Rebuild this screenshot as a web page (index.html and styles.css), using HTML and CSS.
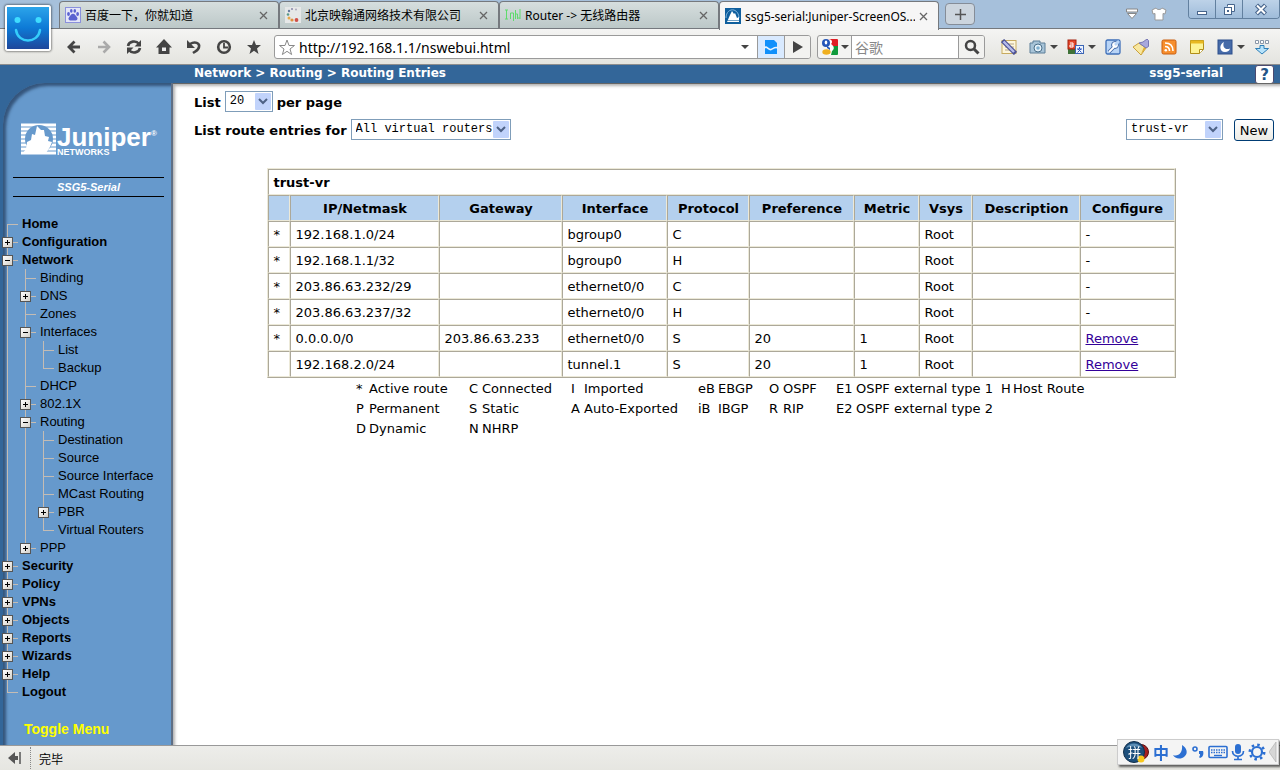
FILE: index.html
```html
<!DOCTYPE html>
<html lang="zh-CN">
<head>
    <meta charset="UTF-8">
    <meta name="viewport" content="width=device-width, initial-scale=1.0">
    <title>ssg5-serial:Juniper-ScreenOS</title>
    <link rel="stylesheet" href="styles.css">
</head>
<body>
    <!-- Browser frame -->
    <header class="browser">
        <button class="app-button" aria-label="Menu">
            <svg width="42" height="42" viewBox="0 0 42 42">
                <defs>
                    <linearGradient id="face" x1="0" y1="0" x2="0" y2="1">
                        <stop offset="0" stop-color="#2ba4ea"/>
                        <stop offset=".5" stop-color="#0d7ad6"/>
                        <stop offset="1" stop-color="#1f479b"/>
                    </linearGradient>
                </defs>
                <rect width="42" height="42" fill="url(#face)"/>
                <circle cx="10.500" cy="13" r="3" fill="#3fdcff"/>
                <circle cx="31.500" cy="13" r="3" fill="#3fdcff"/>
                <path d="M9 23c2 14 22 14 24 0" fill="none" stroke="#35cdfb" stroke-width="2.500" stroke-linecap="round"/>
            </svg>
        </button>

        <div class="tab-strip">
            <div class="tab">
                <svg class="favicon" width="16" height="16" viewBox="0 0 16 16">
                    <rect x=".5" y=".5" width="15" height="15" fill="#e4e6f8" stroke="#8a90dc"/>
                    <g fill="#5a62d0">
                        <ellipse cx="3.500" cy="7" rx="1.400" ry="1.900"/>
                        <ellipse cx="6.300" cy="3.900" rx="1.300" ry="1.800"/>
                        <ellipse cx="9.800" cy="3.900" rx="1.300" ry="1.800"/>
                        <ellipse cx="12.600" cy="7" rx="1.400" ry="1.900"/>
                        <path d="M8 6.800c2 0 2.500 2 4 3.500 1.500 2-.5 3.700-2.500 3.200h-3c-2 .5-4-1.200-2.500-3.200C5.500 8.800 6 6.800 8 6.800z"/>
                    </g>
                </svg>
                <span class="tab-title">百度一下，你就知道</span>
                <button class="tab-close" aria-label="Close"><svg width="9" height="9" viewBox="0 0 9 9"><path d="M1 1l7 7M8 1l-7 7"/></svg></button>
            </div>
            <div class="tab">
                <svg class="favicon" width="16" height="16" viewBox="0 0 16 16">
                    <rect width="16" height="16" fill="#e6e8e8"/>
                    <circle cx="11" cy="2.500" r="1" fill="#aab"/>
                    <circle cx="7" cy="2" r="1" fill="#88a"/>
                    <circle cx="4" cy="4" r="1.200" fill="#667ba0"/>
                    <circle cx="3" cy="7.500" r="1.300" fill="#5b9a8a"/>
                    <circle cx="4" cy="11" r="1.500" fill="#e8a848"/>
                    <circle cx="7" cy="13" r="1.600" fill="#e09040"/>
                    <circle cx="11.500" cy="13" r="1.900" fill="#d05048"/>
                </svg>
                <span class="tab-title">北京映翰通网络技术有限公司</span>
                <button class="tab-close" aria-label="Close"><svg width="9" height="9" viewBox="0 0 9 9"><path d="M1 1l7 7M8 1l-7 7"/></svg></button>
            </div>
            <div class="tab">
                <svg class="favicon" width="16" height="16" viewBox="0 0 16 16">
                    <path d="M1.500 3v9M0 3h3M0 12h3M5.500 12V6h3v8M10.500 3v9M10.500 7h2v5M15 2v10M15 11h-2" fill="none" stroke="#5fdc6c"/>
                </svg>
                <span class="tab-title">Router -&gt; 无线路由器</span>
                <button class="tab-close" aria-label="Close"><svg width="9" height="9" viewBox="0 0 9 9"><path d="M1 1l7 7M8 1l-7 7"/></svg></button>
            </div>
            <div class="tab tab-active">
                <svg class="favicon" width="16" height="16" viewBox="0 0 16 16">
                    <rect width="16" height="16" fill="#0f5f9e"/>
                    <path d="M1 10C1 4 5 1 9 2c3 1 5 4 5 8" fill="none" stroke="#7fb4dc"/>
                    <path d="M2 14l3-7 2-4 2 3 1-1 2 5 2-1v5z" fill="#fff"/>
                    <path d="M0 12.500h16M0 14.500h16" stroke="#0f5f9e" stroke-width=".6"/>
                </svg>
                <span class="tab-title">ssg5-serial:Juniper-ScreenOS...</span>
                <button class="tab-close" aria-label="Close"><svg width="9" height="9" viewBox="0 0 9 9"><path d="M1 1l7 7M8 1l-7 7"/></svg></button>
            </div>
            <button class="new-tab" aria-label="New tab"><svg width="11" height="11" viewBox="0 0 11 11"><path d="M5.500 0v11M0 5.500h11" stroke="#555" stroke-width="1.500"/></svg></button>

            <div class="strip-icons">
                <svg width="14" height="12" viewBox="0 0 14 12"><path d="M1.500 1h11v3h-11zM2.500 5.500h9L7 10.500z" fill="#fff" stroke="#888"/></svg>
                <svg width="16" height="14" viewBox="0 0 16 14"><path d="M5 1c1 2 5 2 6 0l4 2-1 4-2-.5V13H4V6.500L2 7 1 3z" fill="#fff" stroke="#999"/></svg>
            </div>
            <div class="window-buttons">
                <button aria-label="Minimize"><svg width="12" height="13" viewBox="0 0 12 13"><rect x="1.500" y="8.500" width="9" height="3" fill="#fff" stroke="#47658c"/></svg></button>
                <button aria-label="Restore"><svg width="13" height="13" viewBox="0 0 13 13"><path d="M4.500 3.500v-2h7v7h-3" fill="#fff" stroke="#47658c"/><rect x="1.500" y="4.500" width="7" height="7" fill="#fff" stroke="#47658c"/><rect x="4" y="7" width="2" height="2" fill="#47658c"/></svg></button>
                <button class="close" aria-label="Close"><svg width="14" height="13" viewBox="0 0 14 13"><path d="M2.500 2l9 9M11.500 2l-9 9" stroke="#47658c" stroke-width="4.400"/><path d="M3 2.500l8 8M11 2.500l-8 8" stroke="#fff" stroke-width="2"/></svg></button>
            </div>
        </div>

        <div class="toolbar">
            <nav class="nav-buttons">
                <button aria-label="Back"><svg width="16" height="16" viewBox="0 0 16 16"><path d="M14 8H4M8.500 2.500L3 8l5.500 5.500" fill="none" stroke="#444" stroke-width="2.800"/></svg></button>
                <button aria-label="Forward"><svg width="16" height="16" viewBox="0 0 16 16"><path d="M2 8h10M7.500 2.500L13 8l-5.500 5.500" fill="none" stroke="#aaa" stroke-width="2.600"/></svg></button>
                <button aria-label="Reload"><svg width="16" height="16" viewBox="0 0 16 16"><path d="M2 7c1-5 8-6 11-2M14 9c-1 5-8 6-11 2" fill="none" stroke="#444" stroke-width="2.600"/><path d="M15 1v6.500H8.500zM1 15V8.500h6.500z" fill="#444"/></svg></button>
                <button aria-label="Home"><svg width="16" height="16" viewBox="0 0 16 16"><path d="M8 0l8 8.500h-2.500V15h-11V8.500H0z" fill="#444"/><path d="M6 8.500h4V12H6z" fill="#eee"/></svg></button>
                <button aria-label="Undo"><svg width="16" height="16" viewBox="0 0 16 16"><path d="M4 5c5-3 10-1 9 3-.4 3-3 4-6 6" fill="none" stroke="#444" stroke-width="2.600"/><path d="M1 1v8h8z" fill="#444"/></svg></button>
                <button aria-label="History"><svg width="16" height="16" viewBox="0 0 16 16"><circle cx="8" cy="8" r="5.800" fill="none" stroke="#444" stroke-width="2.600"/><path d="M8 4v4.500h4" fill="none" stroke="#444" stroke-width="1.800"/></svg></button>
                <button aria-label="Favorites"><svg width="16" height="16" viewBox="0 0 16 16"><path d="M8 1l2 5h5l-4 3.500 1.500 5.500L8 11.800 3.500 15 5 9.500 1 6h5z" fill="#444"/></svg></button>
            </nav>

            <div class="address-bar">
                <svg class="star" width="18" height="18" viewBox="0 0 18 18"><path d="M9 2l2 5.500h5.500L12 11l1.600 5.500L9 13.300l-4.600 3.200L6 11 1.500 7.500H7z" fill="#fff" stroke="#888"/></svg>
                <input type="text" class="address" aria-label="Address" value="http://192.168.1.1/nswebui.html">
                <span class="caret"></span>
                <button class="cell cell-blue" aria-label="Compatibility"><svg width="14" height="14" viewBox="0 0 14 14"><path d="M1 0h9l3 3v11H1z" fill="#1190fb"/><path d="M0 8.500c2.500-4 4.500 2 7 1s4-3 7-1.500" fill="none" stroke="#e8f4ff" stroke-width="1.600"/></svg></button>
                <button class="cell" aria-label="Go"><svg width="10" height="12" viewBox="0 0 10 12"><path d="M0 0l10 6-10 6z" fill="#444"/></svg></button>
            </div>

            <div class="search-bar">
                <svg width="18" height="18" viewBox="0 0 18 18">
                    <path d="M7 1h9a1 1 0 0 1 1 1v7H9z" fill="#e01f26"/>
                    <path d="M9 8h8v8a1 1 0 0 1-1 1H8z" fill="#109b3c"/>
                    <path d="M7 1c4 0 5 3 3 5 3 2 4 5 1 7l-1 4H6l3-7-3-3z" fill="#fff"/>
                    <circle cx="5" cy="5" r="4" fill="#2456b8"/><ellipse cx="5" cy="4.500" rx="1.300" ry="2" fill="#fff"/>
                    <path d="M6 8l3 2v2l-3-2z" fill="#2456b8"/>
                    <ellipse cx="5.500" cy="14" rx="4.200" ry="2.800" fill="#f0b020"/>
                </svg>
                <span class="caret"></span>
                <input type="text" class="search" aria-label="Search" placeholder="谷歌">
                <button class="cell" aria-label="Search"><svg width="16" height="16" viewBox="0 0 16 16"><circle cx="6.500" cy="6.500" r="4.500" fill="none" stroke="#444" stroke-width="2.500"/><path d="M10 10l4.500 4.500" stroke="#444" stroke-width="3"/></svg></button>
            </div>

            <div class="tool-icons">
                <button aria-label="Notes"><svg width="16" height="16" viewBox="0 0 16 16"><rect x="1" y="1.500" width="14" height="13" fill="#fdf6dc" stroke="#c8ab60"/><path d="M4 5h9M4 8h9M4 11h9" stroke="#b8a888"/><path d="M1.500 1.500l13 13" stroke="#4c5294" stroke-width="4.500"/><path d="M2.500 2.500L13 13" stroke="#b6bcec" stroke-width="2.400"/></svg></button>
                <button class="with-caret" aria-label="Capture"><svg width="17" height="16" viewBox="0 0 17 16"><path d="M1 4h3V2h7v2h5v10H1z" fill="#a8c4d8" stroke="#5d7f98"/><circle cx="9" cy="9" r="4" fill="#e5f2fa" stroke="#4a6e88"/><circle cx="9" cy="9" r="1.800" fill="#80b0d0"/></svg><span class="caret"></span></button>
                <button class="with-caret" aria-label="Translate"><svg width="17" height="16" viewBox="0 0 17 16"><path d="M1 9h7v6H1z" fill="#3f7238"/><rect x="1" y="1" width="8" height="9" fill="#e5482c" stroke="#a4210e"/><path d="M3 4h3v4H3V6h3" fill="none" stroke="#fff"/><rect x="8.500" y="6.500" width="8" height="8" fill="#edf4ff" stroke="#3c66b4"/><path d="M12.500 8v2M10 10h5M14 10l-3.500 3.500M11 10l3.500 3.500" stroke="#2b54c0"/></svg><span class="caret"></span></button>
                <button aria-label="Tools"><svg width="16" height="16" viewBox="0 0 16 16"><rect x="1" y="1" width="14" height="14" rx="1.500" fill="#b8d4f6" stroke="#3e6fb8" stroke-width="1.300"/><path d="M4 13l5-5" stroke="#4068a8" stroke-width="3.500"/><circle cx="10" cy="6" r="3.500" fill="#fff" stroke="#4068a8"/><path d="M4 13l5-5" stroke="#fff" stroke-width="1.800"/><path d="M10 6l4-4" stroke="#b8d4f6" stroke-width="2.500"/></svg></button>
                <button aria-label="Clean"><svg width="16" height="16" viewBox="0 0 16 16"><path d="M0 8l6-4 7 5-5 7z" fill="#f8e7a0" stroke="#c9a13c"/><path d="M8 15l5-6-2-1z" fill="#dfac30"/><path d="M6 4l4-1 4-3 1.500 1.500v6L13 9z" fill="#a8a8dc" stroke="#7676b4"/></svg></button>
                <button aria-label="Feeds"><svg width="16" height="16" viewBox="0 0 16 16"><rect x="1" y="1" width="14" height="14" rx="1.500" fill="#f78f2e" stroke="#c85e10"/><circle cx="4.800" cy="11.200" r="1.300" fill="#fff"/><path d="M4 7.500c3 0 4.500 1.700 4.500 4.500M4 4c5 0 8 3 8 8" fill="none" stroke="#fff" stroke-width="1.600"/></svg></button>
                <button aria-label="Memo"><svg width="16" height="16" viewBox="0 0 16 16"><path d="M1.500 1.500h13v9l-4 4h-9z" fill="#fdf394" stroke="#b18e18"/><path d="M1.500 1.500h13v3h-13z" fill="#e8b820"/><path d="M14 10.500h-3.500v4" fill="#fff" stroke="#b18e18"/></svg></button>
                <button class="with-caret" aria-label="Night mode"><svg width="16" height="16" viewBox="0 0 16 16"><rect x="1" y="1" width="14" height="14" fill="#466ba8" stroke="#2d4f8c"/><path d="M7 3c-5 2-5 10 1 10 3 0 4.500-1.500 5-3.500-5 2-8-2-6-6.500z" fill="#fff"/></svg><span class="caret"></span></button>
                <button aria-label="Downloads"><svg width="16" height="16" viewBox="0 0 16 16"><path d="M1.500 1.500h3v3h-3zM6.500 1.500h3v3h-3zM11.500 1.500h3v3h-3z" fill="#fff" stroke="#8a97a8"/><path d="M6 6.500h4v3h4.500L8 15 1.500 9.500H6z" fill="#b7e3fb" stroke="#2d7fb8"/></svg></button>
            </div>
        </div>
    </header>

    <!-- ScreenOS web UI -->
    <div class="webui">
        <div class="title-bar">
            <div class="crumbs">Network &gt; Routing &gt; Routing Entries</div>
            <div class="host">ssg5-serial</div>
            <button class="help" aria-label="Help">?</button>
        </div>

        <div class="columns">
            <aside class="sidebar">
                <div class="panel">
                    <div class="logo">
                        <svg width="35" height="32" viewBox="0 0 35 32">
                            <path d="M0 .5h35v31H0z" fill="#fff"/>
                            <path d="M0 4h35M0 8h35M0 12h35M0 16h35M0 20h35M0 24h35M0 28h35" stroke="#6699cc"/>
                            <circle cx="18" cy="16" r="14" fill="#6699cc"/>
                            <path d="M1 31l4-5 1-7 4-2 1-6 3 1 2-9 4 4 3 0 1 6 4 1-1 4 4 1-2 5-4 6 1 1z" fill="#fff"/>
                        </svg>
                        <div class="wordmark">
                            <div class="juniper">Juniper<sup>®</sup></div>
                            <div class="networks">NETWORKS</div>
                        </div>
                    </div>
                    <div class="model">SSG5-Serial</div>

                    <ul class="tree tree-root">
                        <li><div class="row"><span class="branch"></span><a href="#">Home</a></div></li>
                        <li><div class="row"><span class="branch"><button class="plus" aria-label="Expand"></button></span><a href="#">Configuration</a></div></li>
                        <li><div class="row"><span class="branch"><button class="minus" aria-label="Collapse"></button></span><a href="#">Network</a></div>
                            <ul class="tree">
                                <li><div class="row"><span class="branch"></span><a href="#">Binding</a></div></li>
                                <li><div class="row"><span class="branch"><button class="plus" aria-label="Expand"></button></span><a href="#">DNS</a></div></li>
                                <li><div class="row"><span class="branch"></span><a href="#">Zones</a></div></li>
                                <li><div class="row"><span class="branch"><button class="minus" aria-label="Collapse"></button></span><a href="#">Interfaces</a></div>
                                    <ul class="tree">
                                        <li><div class="row"><span class="branch"></span><a href="#">List</a></div></li>
                                        <li><div class="row"><span class="branch"></span><a href="#">Backup</a></div></li>
                                    </ul>
                                </li>
                                <li><div class="row"><span class="branch"></span><a href="#">DHCP</a></div></li>
                                <li><div class="row"><span class="branch"><button class="plus" aria-label="Expand"></button></span><a href="#">802.1X</a></div></li>
                                <li><div class="row"><span class="branch"><button class="minus" aria-label="Collapse"></button></span><a href="#">Routing</a></div>
                                    <ul class="tree">
                                        <li><div class="row"><span class="branch"></span><a href="#">Destination</a></div></li>
                                        <li><div class="row"><span class="branch"></span><a href="#">Source</a></div></li>
                                        <li><div class="row"><span class="branch"></span><a href="#">Source Interface</a></div></li>
                                        <li><div class="row"><span class="branch"></span><a href="#">MCast Routing</a></div></li>
                                        <li><div class="row"><span class="branch"><button class="plus" aria-label="Expand"></button></span><a href="#">PBR</a></div></li>
                                        <li><div class="row"><span class="branch"></span><a href="#">Virtual Routers</a></div></li>
                                    </ul>
                                </li>
                                <li><div class="row"><span class="branch"><button class="plus" aria-label="Expand"></button></span><a href="#">PPP</a></div></li>
                            </ul>
                        </li>
                        <li><div class="row"><span class="branch"><button class="plus" aria-label="Expand"></button></span><a href="#">Security</a></div></li>
                        <li><div class="row"><span class="branch"><button class="plus" aria-label="Expand"></button></span><a href="#">Policy</a></div></li>
                        <li><div class="row"><span class="branch"><button class="plus" aria-label="Expand"></button></span><a href="#">VPNs</a></div></li>
                        <li><div class="row"><span class="branch"><button class="plus" aria-label="Expand"></button></span><a href="#">Objects</a></div></li>
                        <li><div class="row"><span class="branch"><button class="plus" aria-label="Expand"></button></span><a href="#">Reports</a></div></li>
                        <li><div class="row"><span class="branch"><button class="plus" aria-label="Expand"></button></span><a href="#">Wizards</a></div></li>
                        <li><div class="row"><span class="branch"><button class="plus" aria-label="Expand"></button></span><a href="#">Help</a></div></li>
                        <li><div class="row"><span class="branch"></span><a href="#">Logout</a></div></li>
                    </ul>
                    <a href="#" class="toggle-menu">Toggle Menu</a>
                </div>
            </aside>

            <main class="main">
                <div class="form-row">
                    <label for="perPage">List</label>
                    <select id="perPage" class="select-short"><option>20</option></select>
                    <span>per page</span>
                </div>
                <div class="form-row">
                    <label for="router">List route entries for</label>
                    <select id="router" class="select-long"><option>All virtual routers</option></select>
                    <div class="form-right">
                        <select class="select-medium" aria-label="Virtual router"><option>trust-vr</option></select>
                        <button class="new-button">New</button>
                    </div>
                </div>

                <div class="routes-wrap">
                    <table class="routes">
                        <colgroup>
                            <col class="c-mark"><col class="c-ip"><col class="c-gateway"><col class="c-interface"><col class="c-protocol">
                            <col class="c-preference"><col class="c-metric"><col class="c-vsys"><col class="c-description"><col class="c-configure">
                        </colgroup>
                        <thead>
                            <tr><th colspan="10" class="caption">trust-vr</th></tr>
                            <tr class="heads"><th></th><th>IP/Netmask</th><th>Gateway</th><th>Interface</th><th>Protocol</th><th>Preference</th><th>Metric</th><th>Vsys</th><th>Description</th><th>Configure</th></tr>
                        </thead>
                        <tbody>
                            <tr><td>*</td><td>192.168.1.0/24</td><td></td><td>bgroup0</td><td>C</td><td></td><td></td><td>Root</td><td></td><td>-</td></tr>
                            <tr><td>*</td><td>192.168.1.1/32</td><td></td><td>bgroup0</td><td>H</td><td></td><td></td><td>Root</td><td></td><td>-</td></tr>
                            <tr><td>*</td><td>203.86.63.232/29</td><td></td><td>ethernet0/0</td><td>C</td><td></td><td></td><td>Root</td><td></td><td>-</td></tr>
                            <tr><td>*</td><td>203.86.63.237/32</td><td></td><td>ethernet0/0</td><td>H</td><td></td><td></td><td>Root</td><td></td><td>-</td></tr>
                            <tr><td>*</td><td>0.0.0.0/0</td><td>203.86.63.233</td><td>ethernet0/0</td><td>S</td><td>20</td><td>1</td><td>Root</td><td></td><td><a href="#">Remove</a></td></tr>
                            <tr><td></td><td>192.168.2.0/24</td><td></td><td>tunnel.1</td><td>S</td><td>20</td><td>1</td><td>Root</td><td></td><td><a href="#">Remove</a></td></tr>
                        </tbody>
                    </table>

                    <div class="legend">
                        <span>*</span><span>Active route</span><span>C</span><span>Connected</span><span>I</span><span>Imported</span><span>eB</span><span>EBGP</span><span>O</span><span>OSPF</span><span>E1</span><span>OSPF external type 1</span><span>H</span><span>Host Route</span>
                        <span class="first">P</span><span>Permanent</span><span>S</span><span>Static</span><span>A</span><span>Auto-Exported</span><span>iB</span><span>IBGP</span><span>R</span><span>RIP</span><span>E2</span><span>OSPF external type 2</span>
                        <span class="first">D</span><span>Dynamic</span><span>N</span><span>NHRP</span>
                    </div>
                </div>
            </main>
        </div>
    </div>

    <footer class="status-bar">
        <button class="collapse" aria-label="Collapse sidebar"><svg width="14" height="12" viewBox="0 0 14 12"><path d="M0 6l7-6v4h3v4H7v4z" fill="#555"/><path d="M12 0v12" stroke="#555" stroke-width="1.500"/></svg></button>
        <span class="status-text">完毕</span>
    </footer>

    <!-- Input method bar floating over the window -->
    <div class="ime">
        <svg width="28" height="24" viewBox="0 0 28 24">
            <circle cx="19" cy="12" r="7.500" fill="#a82020" stroke="#5c1010"/>
            <circle cx="12" cy="12" r="10.500" fill="#1d4f7c" stroke="#122f4c"/>
            <path d="M4 8c3-6 13-6 16 0-5-2-11-2-16 0z" fill="#5e8fb6"/>
            <circle cx="19" cy="19" r="3.500" fill="#f9c81c"/>
        </svg>
        <span class="ime-badge">拼</span>
        <span class="ime-mode">中</span>
        <svg width="16" height="18" viewBox="0 0 16 18"><path d="M10 2c5 3 6 8 3 11-4 4-10 3-12-1 5 2 10-2 9-10z" fill="#2c6fd2"/></svg>
        <svg width="14" height="18" viewBox="0 0 14 18"><circle cx="4" cy="6" r="2" fill="none" stroke="#2c6fd2" stroke-width="1.600"/><path d="M8 8h4c1 3 0 6-3 7l-1-1c1-1 1-2 1-3H8z" fill="#2c6fd2"/></svg>
        <svg width="20" height="14" viewBox="0 0 20 14"><rect x="1" y="1.500" width="18" height="11" rx="1" fill="none" stroke="#2c6fd2" stroke-width="1.600"/><path d="M3 5h14M3 7.500h14" stroke="#2c6fd2" stroke-width="1.500" stroke-dasharray="1.500 1"/><path d="M6 10.500h8" stroke="#2c6fd2" stroke-width="1.400"/></svg>
        <svg width="14" height="18" viewBox="0 0 14 18"><rect x="4" y="1" width="6" height="10" rx="3" fill="#2c6fd2"/><path d="M1.500 8c0 7 11 7 11 0M7 13v4M3 16.500h8" fill="none" stroke="#2c6fd2" stroke-width="1.700"/></svg>
        <svg width="18" height="18" viewBox="0 0 18 18"><circle cx="9" cy="9" r="5" fill="none" stroke="#2c6fd2" stroke-width="2.200"/><circle cx="9" cy="9" r="7.200" fill="none" stroke="#2c6fd2" stroke-width="2.600" stroke-dasharray="2.500 3.155"/></svg>
        <svg width="8" height="20" viewBox="0 0 8 20"><path d="M7 0v20L0 10z" fill="#d6d6d6" stroke="#aaa" stroke-width=".6"/></svg>
    </div>
</body>
</html>
```
FILE: styles.css
```css
* {
    box-sizing: border-box;
}
body {
    margin: 0;
    min-height: 100vh;
    display: flex;
    flex-direction: column;
    font-family: Verdana, "DejaVu Sans", "Noto Sans CJK SC", sans-serif;
    font-size: 13px;
    color: #000;
    background: #fff;
}
button {
    padding: 0;
    border: none;
    background: none;
    display: flex;
    align-items: center;
    justify-content: center;
}
svg {
    display: block;
    flex: none;
}

/* browser frame */
.browser {
    position: relative;
    font-family: Tahoma, "Noto Sans", "Noto Sans CJK SC", sans-serif;
    font-size: 12px;
}
.app-button {
    position: absolute;
    left: 5px;
    top: 5px;
    z-index: 3;
    width: 46px;
    height: 46px;
    border: 2px solid #fff;
    border-radius: 3px;
    box-shadow: 0 0 2px 1px rgba(0,0,0,0.4);
}
.tab-strip {
    height: 28px;
    padding-left: 59px;
    display: flex;
    align-items: flex-end;
    background: #a6c0db;
}
.tab {
    width: 220px;
    height: 27px;
    padding: 0 10px 0 5px;
    display: flex;
    align-items: center;
    gap: 4px;
    background: linear-gradient(#d6dede, #bcc8c8);
    border: 1px solid #75797e;
    border-bottom: none;
    border-radius: 4px 4px 0 0;
}
.tab-title {
    flex: 1;
    min-width: 0;
    white-space: nowrap;
    overflow: hidden;
}
.tab-active {
    position: relative;
    z-index: 2;
    height: 29px;
    margin-bottom: -2px;
    background: #f6f6f6;
}
.tab-close path {
    stroke: #666;
    stroke-width: 1.3;
}
.new-tab {
    width: 30px;
    height: 22px;
    margin: 0 0 3px 6px;
    background: #ccd5de;
    border: 1px solid #858d98;
    border-radius: 4px;
}
.strip-icons {
    align-self: center;
    display: flex;
    align-items: center;
    gap: 12px;
    margin: 0 21px 0 auto;
}
.window-buttons {
    align-self: flex-start;
    display: flex;
    border: 1px solid #62809f;
    border-top: none;
    border-radius: 0 0 4px 4px;
    overflow: hidden;
}
.window-buttons button {
    width: 27px;
    height: 18px;
    background: linear-gradient(#bdd2e8, #9fbcda);
    border-right: 1px solid #62809f;
}
.window-buttons .close {
    width: 36px;
    border-right: none;
}
.toolbar {
    height: 37px;
    padding: 6px 10px 0 59px;
    display: flex;
    align-items: flex-start;
    background: linear-gradient(#f4f4f3, #e4e4df);
    border-top: 1px solid #75797e;
    border-bottom: 1px solid #8d8d8d;
}
.nav-buttons {
    display: flex;
    margin-right: 5px;
}
.nav-buttons button {
    width: 30px;
    height: 24px;
}
.address-bar,
.search-bar {
    height: 24px;
    display: flex;
    align-items: stretch;
    background: #fff;
    border: 1px solid #9a9a9a;
    border-radius: 3px;
}
.address-bar {
    flex: 1;
    min-width: 0;
    margin-right: 6px;
}
.address-bar .star {
    align-self: center;
    margin: 0 3px 0 3px;
}
.address-bar input,
.search-bar input {
    min-width: 0;
    padding: 0;
    border: none;
    outline: none;
    background: #fff;
    color: #000;
    font-family: Tahoma, "Noto Sans", "Noto Sans CJK SC", sans-serif;
    font-size: 14px;
}
.address {
    flex: 1;
}
.caret {
    align-self: center;
    flex: none;
    border: 4px solid transparent;
    border-top-color: #444;
    border-bottom: none;
}
.cell {
    width: 26px;
    border-left: 1px solid #9a9a9a;
    background: #f2f2f0;
    border-radius: 0 2px 2px 0;
}
.cell-blue {
    width: 27px;
    margin-left: 8px;
    background: #d9eaff;
    border-radius: 0;
}
.search-bar {
    width: 168px;
    background: #f4f4f2;
}
.search-bar > svg {
    align-self: center;
    margin: 0 2px 0 3px;
}
.search-bar .search {
    flex: 1;
    margin-left: 2px;
    padding-left: 3px;
    border-left: 1px solid #9a9a9a;
}
.search::placeholder {
    color: #888;
}
.tool-icons {
    display: flex;
    gap: 12px;
    height: 24px;
    margin-left: 16px;
}
.tool-icons .with-caret {
    gap: 4px;
    margin-right: -3px;
}

/* ScreenOS web UI */
.webui {
    flex: 1;
    display: flex;
    flex-direction: column;
}
.title-bar {
    height: 18px;
    padding: 0 6px 0 194px;
    display: flex;
    align-items: flex-start;
    background: #336699;
    color: #fff;
    font-size: 12px;
    font-weight: bold;
    line-height: 16px;
}
.host {
    margin: 0 32px 0 auto;
}
.help {
    width: 19px;
    height: 19px;
    background: #fff;
    border: 1px solid #4a4a70;
    border-radius: 3px;
    color: #225588;
    font-family: "DejaVu Sans", sans-serif;
    font-size: 15px;
    font-weight: bold;
}
.columns {
    flex: 1;
    display: flex;
}
.sidebar {
    width: 173px;
    flex: none;
    padding-left: 3px;
    background: #336699;
    font-family: Arial, "Liberation Sans", sans-serif;
}
.panel {
    height: 100%;
    padding: 40px 0 4px 10px;
    background: #6699cc;
    border-radius: 42px 0 0 0;
    border-right: 2px solid #5f6f85;
    box-shadow: inset 3px 3px 3px rgba(20,40,70,0.6);
}
.logo {
    display: flex;
    gap: 1px;
    padding-left: 8px;
    color: #fff;
    font-weight: bold;
}
.juniper {
    font-size: 26px;
    line-height: 28px;
    height: 25px;
}
.juniper sup {
    font-size: 8px;
    line-height: 8px;
    vertical-align: 10px;
}
.networks {
    font-size: 9px;
    line-height: 8px;
}
.model {
    height: 20px;
    margin: 21px 7px 18px 0;
    border-top: 1px solid #000;
    border-bottom: 1px solid #000;
    color: #fff;
    font-size: 11px;
    font-weight: bold;
    font-style: italic;
    line-height: 18px;
    text-align: center;
}
.tree {
    list-style: none;
    margin: 0;
    padding: 0 0 0 18px;
    font-size: 13px;
    font-weight: normal;
}
.tree-root {
    margin-left: -11px;
    padding-left: 0;
}
.tree-root > li > .row {
    font-weight: bold;
}
.tree li {
    position: relative;
}
/* vertical connector of each level */
.tree li::before {
    content: "";
    position: absolute;
    left: 5px;
    top: 0;
    bottom: 0;
    width: 1px;
    background: #c4bcb4;
}
.tree li:last-child::before {
    bottom: auto;
    height: 9px;
}
.tree-root > li:first-child::before {
    top: 9px;
}
.row {
    display: flex;
    align-items: center;
    height: 18px;
    line-height: 18px;
}
.row a {
    color: #000;
    text-decoration: none;
    white-space: nowrap;
}
.branch {
    position: relative;
    width: 20px;
    height: 18px;
    display: flex;
    align-items: center;
}
.branch::before {
    content: "";
    position: absolute;
    left: 5px;
    top: 9px;
    width: 11px;
    height: 1px;
    background: #c4bcb4;
}
.branch button {
    position: relative;
    width: 11px;
    height: 11px;
    margin-top: 1px;
    border: 1px solid #555;
    background:
        linear-gradient(#000, #000) center / 5px 1px no-repeat,
        linear-gradient(135deg, #fff, #d4d0c8);
}
.branch .plus {
    background:
        linear-gradient(#000, #000) center / 5px 1px no-repeat,
        linear-gradient(#000, #000) center / 1px 5px no-repeat,
        linear-gradient(135deg, #fff, #d4d0c8);
}
.toggle-menu {
    display: block;
    margin: 19px 0 0 11px;
    color: #ffff00;
    font-size: 14px;
    font-weight: bold;
    line-height: 18px;
    text-decoration: none;
}

.main {
    flex: 1;
    min-width: 0;
    padding: 7px 6px 20px 21px;
    border-top: 1px solid #666;
    box-shadow: inset 3px 3px 3px -1px rgba(0,0,0,0.3);
}
.form-row {
    display: flex;
    align-items: flex-start;
    gap: 4px;
    height: 22px;
    margin-bottom: 6px;
    font-weight: bold;
    line-height: 24px;
}
.form-right {
    display: flex;
    gap: 11px;
    margin-left: auto;
}
select {
    appearance: none;
    height: 21px;
    padding: 0 0 1px 4px;
    border: 1px solid #7f9db9;
    border-radius: 0;
    color: #000;
    font-family: SimSun, "Liberation Mono", monospace;
    font-size: 12px;
    background: #fff url("data:image/svg+xml,%3Csvg xmlns='http://www.w3.org/2000/svg' width='16' height='17'%3E%3Crect width='16' height='17' rx='1' fill='%23c1d3fb'/%3E%3Cpath d='M4 6l4 4 4-4' fill='none' stroke='%234d6185' stroke-width='2'/%3E%3C/svg%3E") right 1px center no-repeat;
}
.select-short {
    width: 48px;
}
.select-long {
    width: 160px;
}
.select-medium {
    width: 97px;
}
.new-button {
    width: 40px;
    height: 22px;
    border: 1px solid #003c74;
    border-radius: 3px;
    background: linear-gradient(#fff, #ecebe5);
    font-family: Verdana, "DejaVu Sans", sans-serif;
    font-size: 13px;
}
.routes-wrap {
    padding: 21px 6px 0 0;
    margin-left: -19px;
}
.routes {
    width: 83%;
    margin: 0 auto;
    table-layout: fixed;
    border-collapse: separate;
    border-spacing: 0;
    border: 1px solid;
    border-color: #ece9d8 #aca899 #aca899 #ece9d8;
}
.routes th,
.routes td {
    height: 26px;
    padding: 0 4px;
    border: 1px solid;
    border-color: #aca899 #ece9d8 #ece9d8 #aca899;
    text-align: left;
    white-space: nowrap;
}
.routes .heads th {
    background: #b4d0ee;
    text-align: center;
}
.routes a {
    color: #330099;
}
.c-mark { width: 22px; }
.c-ip { width: 149px; }
.c-gateway { width: 123px; }
.c-interface { width: 105px; }
.c-protocol { width: 82px; }
.c-preference { width: 105px; }
.c-metric { width: 65px; }
.c-vsys { width: 53px; }
.c-description { width: 108px; }
.c-configure { width: 94px; }
.legend {
    display: grid;
    grid-template-columns: 13px 100px 13px 89px 13px 114px 20px 51px 14px 53px 20px 145px 12px 74px;
    justify-content: center;
    padding-top: 1px;
    line-height: 20px;
    white-space: nowrap;
}
.legend .first {
    grid-column-start: 1;
}

/* status bar */
.status-bar {
    height: 25px;
    display: flex;
    align-items: center;
    background: linear-gradient(#ededea, #e6e6e1);
    border-top: 1px solid #999;
    font-family: "Noto Sans CJK SC", sans-serif;
    font-size: 12px;
}
.collapse {
    width: 31px;
    height: 22px;
    border-right: 1px dotted #888;
}
.status-text {
    margin-left: 8px;
}

/* input method bar */
.ime {
    position: fixed;
    right: 1px;
    bottom: 5px;
    z-index: 5;
    height: 26px;
    padding: 0 1px 0 4px;
    display: flex;
    align-items: center;
    gap: 3px;
    background: #f4f4f4;
    border: 1px solid #ccc;
    box-shadow: 2px 2px 2px rgba(0,0,0,0.6);
    font-family: "Noto Sans CJK SC", sans-serif;
}
.ime-badge {
    position: absolute;
    left: 10px;
    top: 3px;
    color: #fff;
    font-size: 13px;
    line-height: 18px;
}
.ime-mode {
    color: #2c6fd2;
    font-size: 16px;
    font-weight: bold;
    line-height: 20px;
}
```
